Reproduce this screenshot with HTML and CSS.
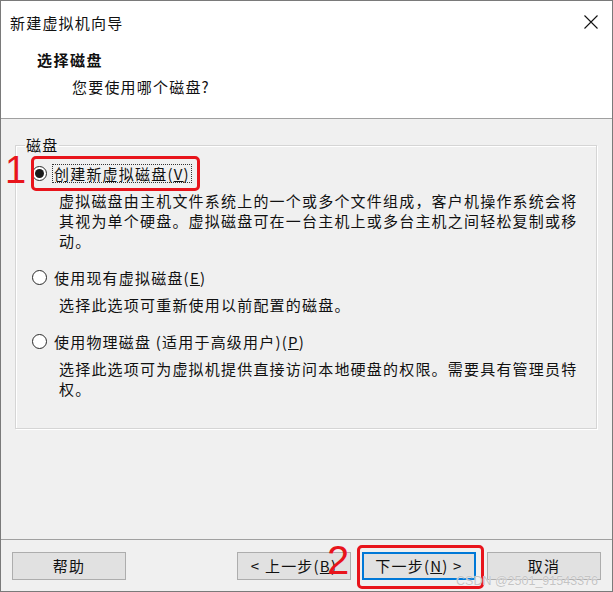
FILE: index.html
```html
<!DOCTYPE html>
<html lang="zh-CN">
<head>
<meta charset="utf-8">
<title>新建虚拟机向导</title>
<link rel="stylesheet" href="styles.css">
</head>
<body>
<div class="window">
  <div class="top">
    <div class="titlebar">
      <span class="title">新建虚拟机向导</span>
      <svg class="close" width="16" height="16" viewBox="0 0 16 16"><path d="M1.5 1.5 L14.5 14.5 M14.5 1.5 L1.5 14.5" stroke="#111" stroke-width="1.1" fill="none"/></svg>
    </div>
    <div class="header">
      <div class="h-title">选择磁盘</div>
      <div class="h-sub">您要使用哪个磁盘?</div>
    </div>
  </div>

  <div class="body">
    <fieldset class="group">
      <legend class="group-label">磁盘</legend>
      <div class="option">
        <div class="opt-row"><span class="radio checked"></span><span class="opt-label focused">创建新虚拟磁盘(<u>V</u>)</span></div>
        <p class="desc">虚拟磁盘由主机文件系统上的一个或多个文件组成，客户机操作系统会将<br>其视为单个硬盘。虚拟磁盘可在一台主机上或多台主机之间轻松复制或移<br>动。</p>
      </div>
      <div class="option">
        <div class="opt-row"><span class="radio"></span><span class="opt-label">使用现有虚拟磁盘(<u>E</u>)</span></div>
        <p class="desc">选择此选项可重新使用以前配置的磁盘。</p>
      </div>
      <div class="option">
        <div class="opt-row"><span class="radio"></span><span class="opt-label">使用物理磁盘 (适用于高级用户)(<u>P</u>)</span></div>
        <p class="desc">选择此选项可为虚拟机提供直接访问本地硬盘的权限。需要具有管理员特<br>权。</p>
      </div>
    </fieldset>
  </div>

  <div class="footer">
    <button class="btn">帮助</button>
    <div class="btn-group">
      <button class="btn">&lt; 上一步(<u>B</u>)</button>
      <button class="btn default">下一步(<u>N</u>) &gt;</button>
      <button class="btn">取消</button>
    </div>
  </div>

  <div class="mark mark-box1"></div>
  <div class="mark-num num1">1</div>
  <div class="mark mark-box2"></div>
  <div class="mark-num num2">2</div>
  <div class="watermark">CSDN @2501_91543376</div>
</div>
</body>
</html>
```

FILE: styles.css
```css
* { box-sizing: border-box; }
html, body { margin: 0; padding: 0; }
body {
  width: 613px;
  height: 592px;
  overflow: hidden;
  background: #ffffff;
  font-family: "Noto Sans CJK SC", "Noto Sans", sans-serif;
  font-size: 15px;
  letter-spacing: 1.2px;
  color: #111;
}
.window {
  position: relative;
  width: 613px;
  height: 592px;
  border: 1px solid #7a7a7a;
  display: flex;
  flex-direction: column;
  background: #f0f0f0;
}
.top {
  background: #ffffff;
  height: 118px;
  border-bottom: 1px solid #a0a0a0;
  flex: none;
}
.titlebar {
  height: 44px;
  display: flex;
  align-items: center;
  justify-content: space-between;
  padding: 0 13px 0 9px;
}
.title { line-height: 20px; }
.close { display: block; margin-top: -2px; }
.header { padding-left: 36px; padding-top: 5px; }
.h-title {
  font-weight: 700;
  line-height: 20px;
  letter-spacing: 1.5px;
}
.h-sub {
  margin-top: 7px;
  padding-left: 35px;
  line-height: 20px;
}
.body {
  flex: none;
  height: 420px;
  padding: 16px 15px 0 14px;
}
.group {
  margin: 0;
  height: 294px;
  border: 1px solid #d5d5d5;
  box-shadow: inset 1px 1px 0 #ffffff, 1px 1px 0 #ffffff;
  padding: 8px 10px 0 17px;
  min-width: 0;
}
.group-label {
  padding: 0 1px;
  margin-left: -8px;
  line-height: 20px;
}
.option + .option { margin-top: 16px; }
.opt-row {
  display: flex;
  align-items: center;
  height: 20px;
  white-space: nowrap;
}
.radio {
  width: 15px;
  height: 15px;
  margin-left: -1px;
  border: 1px solid #2a2a2a;
  border-radius: 50%;
  background: #fff;
  display: flex;
  align-items: center;
  justify-content: center;
  flex: none;
}
.radio.checked::after {
  content: "";
  width: 9px;
  height: 9px;
  border-radius: 50%;
  background: #1a1a1a;
}
.opt-label {
  margin-left: 5px;
  padding: 0 1px;
  border: 1px solid transparent;
  line-height: 17px;
}
.opt-label.focused { border: 1px dotted #333; }
.desc {
  margin: 8px 0 0 26px;
  line-height: 20px;
  white-space: nowrap;
}
.footer {
  flex: none;
  height: 52px;
  border-top: 1px solid #a0a0a0;
  display: flex;
  justify-content: space-between;
  align-items: flex-start;
  padding: 12px 11px 0 11px;
}
.btn-group { display: flex; gap: 11px; }
.btn {
  width: 114px;
  height: 28px;
  background: #e1e1e1;
  border: 1px solid #adadad;
  font-family: inherit;
  font-size: 15px;
  letter-spacing: 1.2px;
  color: #111;
  padding: 0;
  margin: 0;
  line-height: 20px;
}
.btn.default {
  border-color: #0078d7;
  box-shadow: inset 0 0 0 1px #0078d7;
}
.mark {
  position: absolute;
  border: 3px solid #e8141b;
  border-radius: 5px;
}
.mark-box1 { left: 30px; top: 155px; width: 169px; height: 35px; }
.mark-box2 { left: 356px; top: 544px; width: 127px; height: 44px; }
.mark-num {
  position: absolute;
  color: #e8141b;
  font-family: "Liberation Sans", sans-serif;
  font-weight: 400;
  letter-spacing: 0;
  line-height: 1;
}
.num1 { left: 4px; top: 150px; font-size: 38px; }
.num2 { left: 326px; top: 539px; font-size: 40px; }
.watermark {
  position: absolute;
  right: 14px;
  bottom: 3px;
  font-family: "Liberation Sans", sans-serif;
  font-size: 12.5px;
  letter-spacing: 0;
  color: #c4c4c4;
  text-shadow: 0 0 1px #fff;
}
```
